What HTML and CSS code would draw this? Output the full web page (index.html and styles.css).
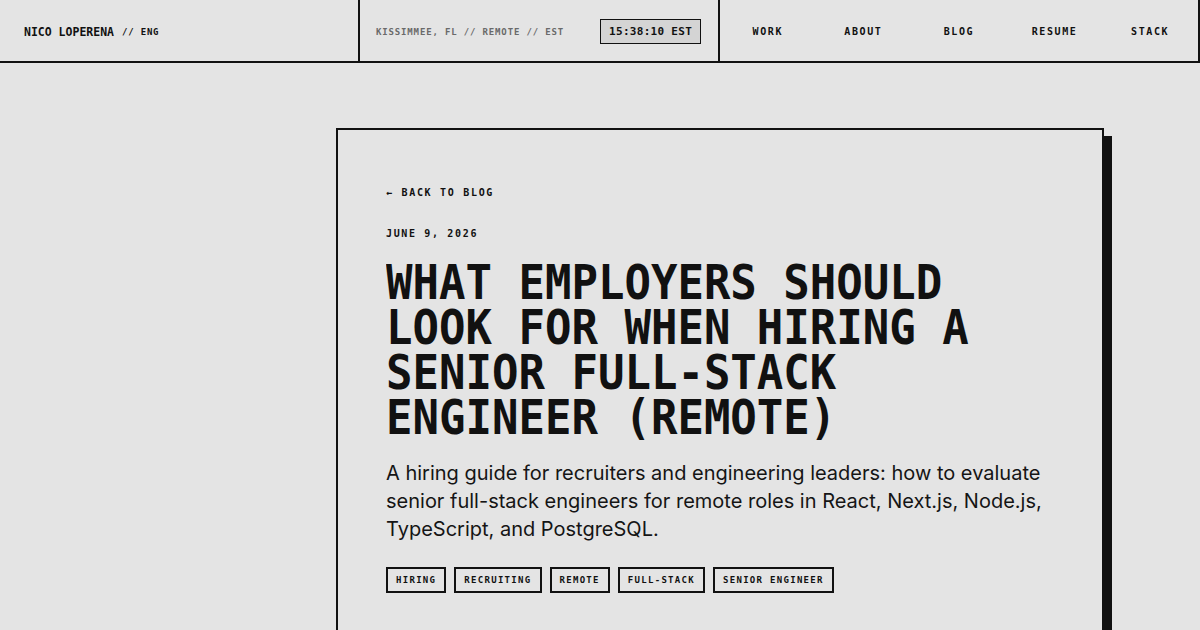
FILE: index.html
```html
<!DOCTYPE html>
<html lang="en">
	<head>
		<meta charset="UTF-8">
		<title>What Employers Should Look For When Hiring a Senior Full-Stack Engineer (Remote)</title>
		<link rel="stylesheet" href="styles.css">
	</head>
	<body>
		<!--顶部导航-->
		<header class="top_bar">
			<div class="top_cell top_name">
				<span class="name_txt">NICO LOPERENA</span>
				<span class="name_sub">// ENG</span>
			</div>
			<div class="top_cell top_loc">
				<span class="loc_txt">KISSIMMEE, FL // REMOTE // EST</span>
				<span class="clock">15:38:10 EST</span>
			</div>
			<nav class="top_cell top_nav">
				<a class="nav_a" href="#">WORK</a>
				<a class="nav_a" href="#">ABOUT</a>
				<a class="nav_a" href="#">BLOG</a>
				<a class="nav_a" href="#">RESUME</a>
				<a class="nav_a" href="#">STACK</a>
			</nav>
		</header>

		<!--文章-->
		<main class="page">
			<article class="post_card">
				<a class="back_a" href="#">&larr; BACK TO BLOG</a>
				<div class="post_date">JUNE 9, 2026</div>
				<h1 class="post_title">WHAT EMPLOYERS SHOULD LOOK FOR WHEN HIRING A SENIOR FULL-STACK ENGINEER (REMOTE)</h1>
				<p class="post_desc">A hiring guide for recruiters and engineering leaders: how to evaluate senior full-stack engineers for remote roles in React, Next.js, Node.js, TypeScript, and PostgreSQL.</p>
				<ul class="tag_list">
					<li class="tag">HIRING</li>
					<li class="tag">RECRUITING</li>
					<li class="tag">REMOTE</li>
					<li class="tag">FULL-STACK</li>
					<li class="tag">SENIOR ENGINEER</li>
				</ul>
			</article>
		</main>
	</body>
</html>
```
FILE: styles.css
```css
/*基础*/

html,
body {
	margin: 0;
	padding: 0;
	height: 100%;
	overflow: hidden;
}

body {
	background-color: #e4e4e4;
	color: #111;
	font-family: "DejaVu Sans Mono", "Liberation Mono", monospace;
}

a {
	color: #111;
	text-decoration: none;
}

/*顶部导航*/

.top_bar {
	display: grid;
	grid-template-columns: 360px 360px 1fr;
	height: 61px;
	border-bottom: 2px solid #111;
	border-right: 2px solid #111;
}

.top_cell {
	display: flex;
	align-items: center;
	padding-top: 2px;
	border-right: 2px solid #111;
}

.top_nav {
	border-right: none;
	padding: 2px 0 0 0;
}

.top_name {
	padding-left: 24px;
	gap: 8px;
}

.name_txt {
	font-size: 11.5px;
	font-weight: bold;
}

.name_sub {
	font-size: 9px;
	font-weight: bold;
	letter-spacing: 0.8px;
	padding-top: 1px;
}

.top_loc {
	padding-left: 16px;
	gap: 36px;
}

.loc_txt {
	font-size: 9px;
	font-weight: bold;
	letter-spacing: 0.85px;
	color: #6a6a6a;
}

.clock {
	font-size: 11px;
	line-height: 13px;
	font-weight: bold;
	letter-spacing: 0.3px;
	padding: 5px 8px 5px 8px;
	background-color: #d4d4d4;
	border: 1px solid #111;
}

.nav_a {
	flex: 1;
	text-align: center;
	font-size: 10px;
	font-weight: bold;
	letter-spacing: 1.6px;
}

/*文章卡片*/

.page {
	padding: 65px 0 0 336px;
}

.post_card {
	width: 668px;
	min-height: 600px;
	border: 2px solid #111;
	box-shadow: 8px 8px 0 #111;
	padding: 57px 48px 48px 48px;
}

.back_a {
	display: block;
	font-size: 10px;
	line-height: 12px;
	font-weight: bold;
	letter-spacing: 1.7px;
}

.post_date {
	margin-top: 29px;
	font-size: 10px;
	line-height: 12px;
	font-weight: bold;
	letter-spacing: 1.65px;
}

.post_title {
	margin: 19px 0 0 0;
	font-size: 44px;
	line-height: 41px;
	font-weight: bold;
	transform: scaleY(1.1);
	transform-origin: left top;
}

.post_desc {
	margin: 36px 0 0 0;
	font-family: Inter, "Noto Sans", sans-serif;
	font-size: 20px;
	line-height: 28px;
	color: #151515;
}

.tag_list {
	list-style: none;
	margin: 24px 0 0 0;
	padding: 0;
	display: flex;
	gap: 8px;
}

.tag {
	font-size: 9px;
	line-height: 12px;
	font-weight: bold;
	letter-spacing: 1.3px;
	padding: 5px 8px 5px 8px;
	border: 2px solid #111;
}
```
